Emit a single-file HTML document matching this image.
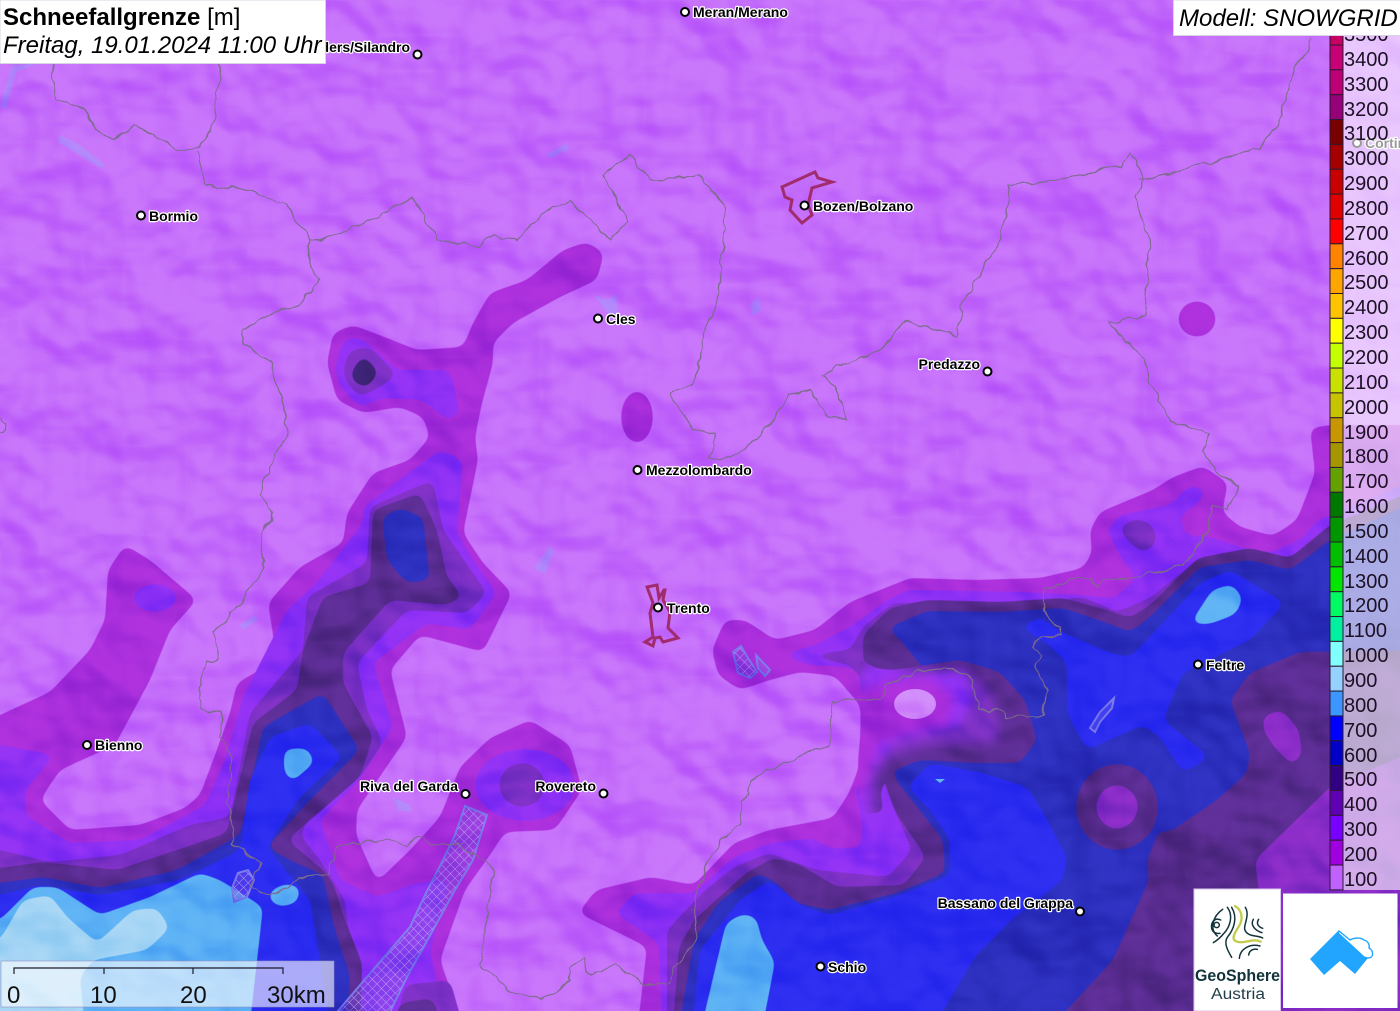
<!DOCTYPE html>
<html><head><meta charset="utf-8"><title>Schneefallgrenze</title>
<style>
html,body{margin:0;padding:0;background:#C56FFB;overflow:hidden}
svg{display:block;position:absolute;left:0;top:0}
text{font-family:"Liberation Sans",sans-serif}
.c{font-size:14px;font-weight:bold;fill:#000;stroke:#fff;stroke-width:2.4px;paint-order:stroke;stroke-linejoin:round}
.l{font-size:20px;fill:#1c1024}
.s{font-size:24px;fill:#111}
.h{font-size:24px;fill:#000}
.d{fill:#fff;stroke:#000;stroke-width:2}
.b{fill:none;stroke:#7d6c8c;stroke-width:1.2}
.lk{fill:rgba(130,125,245,.28);stroke:#7a78ea;stroke-width:2}
.m{stroke:#2a1a30;stroke-width:1}
</style></head><body>
<svg width="1400" height="1011" viewBox="0 0 1400 1011" xmlns="http://www.w3.org/2000/svg">
<defs>
<filter id="sm" filterUnits="userSpaceOnUse" x="-80" y="-80" width="1560" height="1200" color-interpolation-filters="sRGB">
<feGaussianBlur stdDeviation="5"/>
<feComponentTransfer><feFuncA type="linear" slope="11" intercept="-5"/></feComponentTransfer>
</filter>
<filter id="hs" filterUnits="userSpaceOnUse" x="0" y="0" width="1400" height="1011" color-interpolation-filters="sRGB">
<feTurbulence type="fractalNoise" baseFrequency=".012 .014" numOctaves="3" seed="23" result="n"/>
<feDiffuseLighting in="n" surfaceScale="30" diffuseConstant=".63" lighting-color="#fff"><feDistantLight azimuth="300" elevation="55"/></feDiffuseLighting>
</filter>
<filter id="wg" filterUnits="userSpaceOnUse" x="-20" y="-20" width="1440" height="1051" color-interpolation-filters="sRGB">
<feTurbulence type="fractalNoise" baseFrequency=".07" numOctaves="2" seed="4" result="t"/>
<feDisplacementMap in="SourceGraphic" in2="t" scale="9" xChannelSelector="R" yChannelSelector="G"/>
</filter>
<pattern id="ht" width="6.5" height="6.5" patternUnits="userSpaceOnUse" patternTransform="rotate(45)">
<rect width="6.5" height="6.5" fill="#7a4fe0" fill-opacity=".4"/>
<path d="M0 0H6.5M0 0V6.5" stroke="#b9a0f4" stroke-width=".9"/>
</pattern>
</defs>

<rect width="1400" height="1011" fill="#C56FFB"/>

<!-- 200 -->
<g filter="url(#sm)" fill="#A92EDC">
<polygon points="-40,733 0,715 50,692 90,650 105,620 108,570 125,545 150,560 197,600 170,630 150,680 115,745 60,770 40,800 70,830 140,825 185,808 200,795 215,755 230,713 237,683 277,660 268,603 300,567 343,543 347,513 373,473 410,460 430,437 423,417 400,407 363,413 337,400 327,363 333,333 353,325 387,338 417,350 463,347 473,323 490,293 527,280 563,250 587,242 604,253 597,280 560,297 513,323 493,343 493,363 482,403 475,437 478,460 463,533 483,563 512,593 483,652 420,635 390,670 407,737 357,810 356,835 377,882 410,850 440,817 460,767 490,738 530,720 570,745 582,790 555,830 505,832 490,855 465,890 440,960 472,1050 -40,1050"/>
<polygon points="635,1050 647,947 619,933 578,913 596,890 651,877 694,885 734,843 769,830 833,818 849,793 858,770 862,740 860,705 835,676 800,672 770,680 740,690 718,675 712,650 725,620 745,620 775,640 815,630 850,602 910,578 977,580 1040,578 1083,568 1092,553 1090,530 1100,512 1153,490 1173,477 1203,466 1228,483 1222,512 1240,527 1273,536 1297,520 1315,473 1310,428 1330,425 1440,425 1440,1050"/>
<ellipse cx="1197" cy="319" rx="19" ry="18"/>
<ellipse cx="637" cy="417" rx="16" ry="26"/>
</g>
<!-- 300 -->
<g filter="url(#sm)" fill="#8E30F5">
<polygon points="-40,748 0,745 55,755 25,790 25,815 70,843 140,840 205,805 225,760 243,697 287,610 313,587 363,523 363,507 440,450 463,460 457,533 473,560 497,593 470,630 427,623 373,663 393,727 357,783 320,820 340,880 377,897 420,882 450,880 430,950 450,1050 -40,1050"/>
<polygon points="335,367 343,340 360,337 397,370 450,370 460,413 447,420 423,400 383,398 360,407 340,387"/>
<ellipse cx="155" cy="598" rx="22" ry="14"/>
<ellipse cx="525" cy="785" rx="50" ry="36"/>
<polygon points="780,655 815,645 850,627 883,603 907,590 1023,592 1080,595 1115,598 1137,578 1122,560 1107,530 1120,515 1170,505 1190,485 1207,490 1195,507 1180,515 1185,535 1210,537 1240,547 1270,553 1300,540 1318,520 1440,470 1440,1050 663,1050 659,943 615,913 635,893 694,893 734,857 769,843 813,838 829,848 860,848 863,827 855,790 872,770 870,745 880,720 880,690 850,667 810,665"/>
</g>
<!-- 400 -->
<g filter="url(#sm)" fill="#7A2FC4">
<polygon points="-40,845 0,850 50,862 120,855 190,825 230,817 250,713 303,650 307,597 367,563 370,507 433,480 443,530 487,593 467,613 407,610 357,663 367,710 383,743 360,777 313,810 300,835 320,860 345,900 352,960 365,1050 -40,1050"/>
<polygon points="343,370 350,350 370,347 397,375 380,387 360,397 347,383"/>
<ellipse cx="522" cy="785" rx="23" ry="22"/>
<polygon points="390,1050 405,985 450,980 470,1050"/>
<polygon points="1119,528 1133,519 1150,522 1157,537 1153,548 1140,552 1127,540"/>
<polygon points="800,655 850,650 863,627 893,603 977,603 1043,602 1083,597 1117,612 1150,598 1197,560 1243,553 1277,567 1317,540 1440,500 1440,1050 667,1050 667,930 702,893 734,867 769,853 817,870 888,877 912,850 890,800 880,770 880,700 850,665"/>
</g>
<!-- 500 -->
<g filter="url(#sm)" fill="#5A2C92">
<polygon points="-40,868 0,868 43,862 117,870 177,850 227,833 253,723 297,690 303,650 323,597 370,583 373,510 420,493 437,530 447,577 463,597 447,605 390,600 343,653 343,683 373,737 360,777 287,840 323,870 333,883 345,920 362,963 360,1050 -40,1050"/>
<polygon points="351,372 363,355 379,372 367,388 353,382" fill="#3B2272"/>
<polygon points="385,1050 400,1003 433,998 450,1050"/>
<polygon points="863,635 890,608 927,600 1000,602 1063,598 1107,610 1130,618 1150,605 1198,558 1250,548 1290,558 1330,525 1440,480 1440,1050 671,1050 679,947 694,920 746,873 773,858 797,863 837,887 904,885 926,857 896,813 884,780 890,700 863,660"/>
</g>
<!-- 600 -->
<g filter="url(#sm)" fill="#2C2FBE">
<polygon points="-40,883 0,883 43,877 100,888 177,870 240,835 263,727 323,693 360,750 313,797 267,847 290,860 323,875 335,930 350,975 345,1050 -40,1050"/>
<polygon points="382,517 400,508 423,517 430,580 407,583 387,560"/>
<polygon points="887,628 927,611 1000,612 1063,608 1107,623 1130,632 1150,617 1200,567 1250,560 1290,570 1330,540 1440,490 1440,1050 675,1050 694,940 718,903 758,873 777,883 797,903 829,910 896,893 945,873 943,840 896,780 893,770 950,700 900,640"/>
</g>
<!-- 700 -->
<g filter="url(#sm)" fill="#2B2CF0">
<polygon points="-40,897 0,895 40,885 100,895 180,880 240,850 250,780 270,737 310,723 343,757 300,797 267,847 310,900 320,960 335,1050 -40,1050"/>
<polygon points="1020,627 1040,617 1057,630 1110,653 1130,657 1140,647 1200,583 1230,570 1285,603 1250,640 1183,673 1163,720 1210,757 1183,773 1160,737 1143,725 1087,750 1067,713 1067,663 1047,643"/>
<polygon points="907,787 930,763 983,773 1027,787 1040,807 1067,857 1063,880 1011,920 975,957 920,1050 690,1050 700,950 740,900 770,880 800,905 830,915 900,895 950,875 950,840 930,810"/>
</g>
<!-- dark SE region -->
<g filter="url(#sm)" fill="#5A2C92">
<polygon points="1230,700 1250,673 1300,652 1440,650 1440,1050 1030,1050 1113,960 1149,880 1147,860 1160,830 1170,832 1217,800 1247,773 1250,753"/>
<ellipse cx="1117" cy="807" rx="41" ry="43"/>
</g>
<g filter="url(#sm)" fill="#8A2CC8">
<polygon points="1440,740 1330,787 1255,860 1260,900 1285,1050 1440,1050"/>
<polygon points="1264,715 1282,710 1299,730 1302,755 1292,765 1275,748 1263,730"/>
<ellipse cx="1117" cy="807" rx="21" ry="22"/>
</g>
<!-- peninsula -->
<g filter="url(#sm)">
<polygon fill="#5A2C92" points="856,655 880,672 960,660 1000,672 1025,700 1037,740 1020,763 975,763 920,760 895,770 880,790 884,815 872,812 866,720"/>
<polygon fill="#7A2FC4" points="860,660 885,675 965,668 990,690 1000,730 998,742 930,745 890,757 875,780 878,812 866,812 862,720"/>
<polygon fill="#8E30F5" points="862,667 910,672 965,672 972,700 960,725 895,742 872,770 868,815 862,820 860,740"/>
<polygon fill="#A92EDC" points="860,690 890,680 930,678 955,697 948,725 905,735 878,745 866,790 860,805 858,760 862,720"/>
</g>
<ellipse cx="915" cy="704" rx="21" ry="15" fill="#D088FA"/>
<!-- light blue -->
<g filter="url(#sm)" fill="#5AAFF5">
<polygon points="-40,920 0,920 33,887 57,887 100,915 150,897 200,873 220,880 263,907 247,1050 -40,1050"/>
<polygon points="284,749 307,748 315,762 292,782 284,772"/>
<polygon points="269,892 283,884 300,886 298,902 282,907 270,902"/>
<polygon points="696,1050 726,923 742,914 756,917 762,940 775,962 758,1050"/>
<polygon points="1190,624 1212,590 1232,584 1243,598 1236,614 1210,624"/>
</g>
<polygon points="935,779 945,779 940,783" fill="#5AAFF5"/>
<g filter="url(#sm)" fill="#A5D5F5">
<polygon points="-40,940 0,940 23,900 50,895 67,917 97,943 133,910 157,908 170,928 147,950 93,960 80,977 87,1050 -40,1050"/>
</g>

<!-- lakes -->
<path class="lk" style="fill:url(#ht)" d="M465 806 L455 835 L443 860 L425 895 L410 927 L367 977 L337 1012 L390 1012 L407 977 L433 930 L455 890 L473 860 L487 815Z"/>
<path class="lk" style="fill:url(#ht)" d="M232 888 L238 873 L248 870 L254 880 L247 897 L234 902Z"/>
<path class="lk" style="fill:url(#ht)" d="M733 652 L741 646 L748 658 L757 672 L750 678 L738 673Z"/>
<path class="lk" d="M756 655 L770 670 L765 676 L758 668Z"/>
<path class="lk" d="M1100 712 L1114 698 L1112 708 L1100 722 L1095 732 L1090 728Z"/>
<g fill="#9a90fb" opacity=".55">
<path d="M60 135 L80 145 L105 165 L100 168 L75 152 L58 142Z"/>
<path d="M545 155 L565 144 L570 148 L552 158Z"/>
<path d="M594 295 L608 300 L616 293 L618 310 L612 318 L604 308Z"/>
<path d="M750 305 L758 297 L762 310 L753 316Z"/>
<path d="M534 568 L550 546 L554 552 L545 574Z"/>
<path d="M240 625 L255 615 L258 620 L243 630Z"/>
<path d="M392 797 L410 805 L412 812 L398 810Z"/>
<path d="M0 105 L12 65 L36 64 L16 72 L6 110Z"/>
</g>

<!-- hillshade -->
<rect width="1400" height="1011" filter="url(#hs)" style="mix-blend-mode:overlay" opacity=".3"/>

<!-- borders -->
<g filter="url(#wg)">
<polyline class="b" points="52,62 55,100 85,110 95,130 115,140 135,125 180,150 200,145 215,120 220,62"/>
<polyline class="b" points="198,150 205,185 250,190 285,205 312,240 325,239 343,232 380,215 412,197 437,240 477,247 492,233 503,240 517,240 540,215 570,200 610,240 628,220 602,175 630,155 650,180 700,175 725,210 718,300 705,335 695,385 670,395 695,430 715,435 710,460 740,455 770,425 790,395 810,390 825,415 848,420 835,385 822,375 880,350 905,320 955,335 965,300 1000,240 1010,185 1060,180 1120,165 1132,152 1145,180 1135,195 1150,245 1145,315 1108,322 1145,360 1150,385 1170,420 1210,435 1203,450 1213,468 1228,482 1237,485 1236,495 1228,505 1228,510 1213,507 1207,533 1197,547 1183,565 1137,577 1103,578 1097,587 1090,577 1067,580 1053,587 1043,590 1045,615 1060,628 1060,636 1040,637 1033,645 1042,655 1035,665 1047,690 1043,715 1037,718 1008,717 1006,711 995,708 990,712 978,710 970,675 945,668 915,672 900,680 885,685 880,700 833,700 830,745 790,760 750,780 750,795 740,802 740,823 726,835 706,862 704,877 694,893 696,940 675,967 669,982 643,985 613,962 601,972 586,972 584,958 570,968 570,980 560,990 540,1000 510,990 480,965 493,870 457,843 433,845 417,837 407,847 387,838 360,843 337,847 333,860 328,875 300,878 287,888 267,895 250,887 260,863 247,855 232,845 233,827 227,800 233,757 220,737 220,713 200,707 200,687 207,663 220,658 215,630 243,600 263,567 262,537 272,513 260,493 278,450 288,435 285,410 270,360 243,345 242,330 262,318 300,303 320,280 310,267 312,240"/>
<polyline class="b" points="1312,38 1295,70 1280,120 1258,148 1200,165 1140,180"/>
<path class="b" d="M0 418 L6 424 L3 432 L0 434"/>
</g>

<!-- city outlines -->
<g fill="none" stroke="#A02C6E" stroke-width="3" stroke-linejoin="miter">
<path d="M782 187 L815 172 L818 178 L832 182 L812 188 L808 205 L812 215 L802 223 L790 210 L792 200 L785 197Z"/>
<path d="M647 587 L657 585 L659 598 L664 590 L665 590 L663 600 L670 612 L668 628 L678 638 L663 642 L660 637 L655 638 L653 646 L645 642 L653 637 L650 613 L653 603Z"/>
</g>

<!-- Cities -->
<circle class="d" cx="1357" cy="143" r="4"/><text class="c" x="1365" y="148">Cortina</text>
<circle class="d" cx="685" cy="12" r="4"/><text class="c" x="693" y="17">Meran/Merano</text>
<circle class="d" cx="417.500" cy="54.500" r="4"/><text class="c" x="410" y="52" text-anchor="end">Schlanders/Silandro</text>
<circle class="d" cx="141" cy="215.500" r="4"/><text class="c" x="149" y="221">Bormio</text>
<circle class="d" cx="804.500" cy="205.500" r="4"/><text class="c" x="813" y="211">Bozen/Bolzano</text>
<circle class="d" cx="598" cy="318.500" r="4"/><text class="c" x="606" y="324">Cles</text>
<circle class="d" cx="987.500" cy="371.500" r="4"/><text class="c" x="980" y="369" text-anchor="end">Predazzo</text>
<circle class="d" cx="637.500" cy="470" r="4"/><text class="c" x="646" y="475">Mezzolombardo</text>
<circle class="d" cx="658" cy="607.500" r="4"/><text class="c" x="667" y="613">Trento</text>
<circle class="d" cx="1198" cy="664.500" r="4"/><text class="c" x="1206" y="670">Feltre</text>
<circle class="d" cx="87" cy="745" r="4"/><text class="c" x="95" y="750">Bienno</text>
<circle class="d" cx="465.500" cy="794" r="4"/><text class="c" x="458" y="791" text-anchor="end">Riva del Garda</text>
<circle class="d" cx="603.500" cy="793.500" r="4"/><text class="c" x="596" y="791" text-anchor="end">Rovereto</text>
<circle class="d" cx="1080" cy="911.500" r="4"/><text class="c" x="1073" y="908" text-anchor="end">Bassano del Grappa</text>
<circle class="d" cx="820.500" cy="966.500" r="4"/><text class="c" x="828" y="972">Schio</text>

<!-- legend backing -->
<rect x="1343" y="30" width="57" height="860" fill="#fff" fill-opacity=".6"/>

<!-- legend bar -->
<g class="m">
<rect class="m" x="1330" y="20" width="13" height="25" fill="#C80064"/>
<rect class="m" x="1330" y="45" width="13" height="24.85" fill="#C80078"/>
<rect class="m" x="1330" y="69.85" width="13" height="24.85" fill="#BE0078"/>
<rect class="m" x="1330" y="94.7" width="13" height="24.85" fill="#960078"/>
<rect class="m" x="1330" y="119.55" width="13" height="24.85" fill="#780000"/>
<rect class="m" x="1330" y="144.4" width="13" height="24.85" fill="#A50000"/>
<rect class="m" x="1330" y="169.25" width="13" height="24.85" fill="#C80000"/>
<rect class="m" x="1330" y="194.1" width="13" height="24.85" fill="#E10000"/>
<rect class="m" x="1330" y="218.95" width="13" height="24.85" fill="#FF0000"/>
<rect class="m" x="1330" y="243.8" width="13" height="24.85" fill="#FF8200"/>
<rect class="m" x="1330" y="268.65" width="13" height="24.85" fill="#FFA500"/>
<rect class="m" x="1330" y="293.5" width="13" height="24.85" fill="#FFC300"/>
<rect class="m" x="1330" y="318.35" width="13" height="24.85" fill="#FFFF00"/>
<rect class="m" x="1330" y="343.2" width="13" height="24.85" fill="#C3FF00"/>
<rect class="m" x="1330" y="368.05" width="13" height="24.85" fill="#C8E100"/>
<rect class="m" x="1330" y="392.9" width="13" height="24.85" fill="#C8C300"/>
<rect class="m" x="1330" y="417.75" width="13" height="24.85" fill="#C89600"/>
<rect class="m" x="1330" y="442.6" width="13" height="24.85" fill="#A59600"/>
<rect class="m" x="1330" y="467.45" width="13" height="24.85" fill="#64A000"/>
<rect class="m" x="1330" y="492.3" width="13" height="24.85" fill="#007800"/>
<rect class="m" x="1330" y="517.15" width="13" height="24.85" fill="#009600"/>
<rect class="m" x="1330" y="542" width="13" height="24.85" fill="#00BE00"/>
<rect class="m" x="1330" y="566.85" width="13" height="24.85" fill="#00E600"/>
<rect class="m" x="1330" y="591.7" width="13" height="24.85" fill="#00FA64"/>
<rect class="m" x="1330" y="616.55" width="13" height="24.85" fill="#00F0A0"/>
<rect class="m" x="1330" y="641.4" width="13" height="24.85" fill="#80FFFF"/>
<rect class="m" x="1330" y="666.25" width="13" height="24.85" fill="#96D2FF"/>
<rect class="m" x="1330" y="691.1" width="13" height="24.85" fill="#3C96FF"/>
<rect class="m" x="1330" y="715.95" width="13" height="24.85" fill="#0000FF"/>
<rect class="m" x="1330" y="740.8" width="13" height="24.85" fill="#0000C8"/>
<rect class="m" x="1330" y="765.65" width="13" height="24.85" fill="#320082"/>
<rect class="m" x="1330" y="790.5" width="13" height="24.85" fill="#5F00B4"/>
<rect class="m" x="1330" y="815.35" width="13" height="24.85" fill="#7800FF"/>
<rect class="m" x="1330" y="840.2" width="13" height="24.85" fill="#A000E0"/>
<rect class="m" x="1330" y="865.05" width="13" height="24.85" fill="#C060FF"/>
</g>
<g class="l">
<text class="l" x="1344" y="41">3500</text>
<text class="l" x="1344" y="66">3400</text>
<text class="l" x="1344" y="91">3300</text>
<text class="l" x="1344" y="116">3200</text>
<text class="l" x="1344" y="140">3100</text>
<text class="l" x="1344" y="165">3000</text>
<text class="l" x="1344" y="190">2900</text>
<text class="l" x="1344" y="215">2800</text>
<text class="l" x="1344" y="240">2700</text>
<text class="l" x="1344" y="265">2600</text>
<text class="l" x="1344" y="289">2500</text>
<text class="l" x="1344" y="314">2400</text>
<text class="l" x="1344" y="339">2300</text>
<text class="l" x="1344" y="364">2200</text>
<text class="l" x="1344" y="389">2100</text>
<text class="l" x="1344" y="414">2000</text>
<text class="l" x="1344" y="439">1900</text>
<text class="l" x="1344" y="463">1800</text>
<text class="l" x="1344" y="488">1700</text>
<text class="l" x="1344" y="513">1600</text>
<text class="l" x="1344" y="538">1500</text>
<text class="l" x="1344" y="563">1400</text>
<text class="l" x="1344" y="588">1300</text>
<text class="l" x="1344" y="612">1200</text>
<text class="l" x="1344" y="637">1100</text>
<text class="l" x="1344" y="662">1000</text>
<text class="l" x="1344" y="687">900</text>
<text class="l" x="1344" y="712">800</text>
<text class="l" x="1344" y="737">700</text>
<text class="l" x="1344" y="762">600</text>
<text class="l" x="1344" y="786">500</text>
<text class="l" x="1344" y="811">400</text>
<text class="l" x="1344" y="836">300</text>
<text class="l" x="1344" y="861">200</text>
<text class="l" x="1344" y="886">100</text>
</g>

<!-- title boxes -->
<rect x="0" y="0" width="325.5" height="63.5" fill="#fff" stroke="#d9d3e0" stroke-width="1"/>
<text class="h" x="3" y="25"><tspan font-weight="bold">Schneefallgrenze</tspan> [m]</text>
<text class="h" x="3" y="53" font-style="italic">Freitag, 19.01.2024 11:00 Uhr</text>
<rect x="1173.5" y="0" width="227" height="35.5" fill="#fff" stroke="#d9d3e0" stroke-width="1"/>
<text class="h" x="1179" y="26" font-style="italic">Modell: SNOWGRID</text>

<!-- scale bar -->
<rect x="1" y="961" width="333" height="46" fill="#fff" fill-opacity=".6" stroke="#8f8fc0" stroke-width=".6"/>
<path d="M14 974 V968 H283 V974 M104 968 V974 M193 968 V974" fill="none" stroke="#1a1a2a" stroke-width="1.2"/>
<text class="s" x="7" y="1003">0</text>
<text class="s" x="90" y="1003">10</text>
<text class="s" x="180" y="1003">20</text>
<text class="s" x="267" y="1003">30km</text>

<!-- logos -->
<rect x="1194" y="889" width="86.5" height="122" fill="#fff" stroke="#d9c6ee" stroke-width="1"/>
<rect x="1283" y="893.5" width="114.5" height="114.5" fill="#fff"/>
<g transform="translate(1170 860) scale(.3333)" fill="none" stroke="#12333B" stroke-width="4.5" stroke-linecap="round">
<circle cx="140" cy="195" r="8"/>
<path d="M152 180 C135 172 122 185 125 205 C128 218 140 222 150 220"/>
<path d="M158 148 C128 168 118 208 142 228"/>
<path d="M172 142 C190 165 182 200 160 222 C150 234 140 242 130 248"/>
<path d="M185 142 C205 175 190 210 172 232 C160 250 175 275 185 292"/>
<path d="M226 142 C240 165 222 190 224 208 C232 232 262 225 278 234"/>
<path d="M250 178 C240 195 255 212 276 218"/>
<path d="M266 178 C258 190 264 200 278 205"/>
<path d="M208 295 C210 268 238 250 270 258"/>
<path d="M236 285 C238 270 250 266 262 268"/>
<path d="M195 138 C215 150 222 175 206 200 C190 225 182 242 205 246 C230 250 250 234 272 245" stroke="#C2CC4E" stroke-width="7"/>
</g>
<text x="1237.5" y="981" text-anchor="middle" font-size="16.5" font-weight="bold" fill="#12333B" textLength="85" lengthAdjust="spacingAndGlyphs">GeoSphere</text>
<text x="1238" y="999" text-anchor="middle" font-size="15.5" fill="#23404a" textLength="54" lengthAdjust="spacingAndGlyphs">Austria</text>
<path d="M1310 959 L1338 931 L1368 958 L1355 974 L1340 961 L1324 975Z" fill="#22A5FF"/>
<path d="M1339 931 L1350 940 C1353 938 1360 937 1364 940 C1368 941 1370 945 1369 948 C1374 951 1374 958 1368 958 L1364 957 L1338 933Z" fill="#fff" stroke="#22A5FF" stroke-width="1.4"/>
</svg>
</body></html>
